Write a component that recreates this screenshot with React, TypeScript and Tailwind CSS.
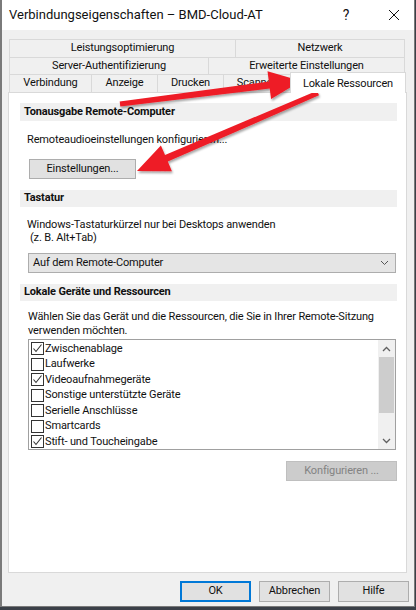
import React from 'react';

const row1 = [
  { label: 'Leistungsoptimierung', w: 'w-[226px]' },
  { label: 'Netzwerk', w: 'w-[170px]' },
];
const row2 = [
  { label: 'Server-Authentifizierung', w: 'w-[199px]' },
  { label: 'Erweiterte Einstellungen', w: 'w-[197px]' },
];
const row3 = [
  { label: 'Verbindung', w: 'w-[82px]' },
  { label: 'Anzeige', w: 'w-[66px]' },
  { label: 'Drucken', w: 'w-[66px]' },
  { label: 'Scannen', w: 'w-[68px]' },
];

const devices = [
  { label: 'Zwischenablage', checked: true },
  { label: 'Laufwerke', checked: false },
  { label: 'Videoaufnahmegeräte', checked: true },
  { label: 'Sonstige unterstützte Geräte', checked: false },
  { label: 'Serielle Anschlüsse', checked: false },
  { label: 'Smartcards', checked: false },
  { label: 'Stift- und Toucheingabe', checked: true },
];

const Tab = ({ label, w, last }: { label: string; w: string; last?: boolean }) => (
  <div
    className={`${w} h-full flex items-center justify-center border-t border-l border-[#d9d9d9] ${last ? 'border-r' : ''}`}
  >
    {label}
  </div>
);

const Section = ({ title, h }: { title: string; h: string }) => (
  <div className={`${h} bg-[#f0f0f0] pl-[4px] flex items-center font-bold text-[#111]`}>{title}</div>
);

const Checkbox = ({ checked }: { checked: boolean }) => (
  <div className="w-[13px] h-[13px] border border-[#333] bg-white shrink-0 flex items-center justify-center">
    {checked && (
      <svg width="11" height="11" viewBox="0 0 11 11">
        <path d="M1.5 5.5 L4 8.5 L9.5 1.5" fill="none" stroke="#333" strokeWidth="1.1" />
      </svg>
    )}
  </div>
);

const Chevron = ({ up }: { up?: boolean }) => (
  <svg width="9" height="6" viewBox="0 0 9 6">
    <path d={up ? 'M1 5 L4.5 1.5 L8 5' : 'M1 1 L4.5 4.5 L8 1'} fill="none" stroke="#606060" strokeWidth="1.3" />
  </svg>
);

const Arrows = () => (
  <svg className="absolute inset-0 pointer-events-none" width="416" height="610" viewBox="0 0 416 610">
    <defs>
      <filter id="sh" x="-10%" y="-10%" width="120%" height="130%">
        <feDropShadow dx="1" dy="2" stdDeviation="1.2" floodColor="#000" floodOpacity="0.35" />
      </filter>
    </defs>
    <g fill="#ee1c25" filter="url(#sh)">
      <polygon points="119.7,101.5 268.9,81.6 267.5,71.2 301,81 271.1,99 269.7,88.6 120.3,106.5" />
      <polygon points="317,90.7 165,155.1 160.9,145.4 137,171 171.9,171.2 167.8,161.5 319,95.3" />
    </g>
  </svg>
);

export default function App() {
  return (
    <div className="relative w-[416px] h-[610px] bg-[#3b4048] overflow-hidden font-['Segoe_UI',Roboto,'Liberation_Sans',sans-serif] text-[11px] tracking-[-0.15px] text-[#111]">
      <div className="w-[415px] h-[607px] bg-[#f0f0f0] border-l-2 border-r border-b border-[#7a7a7a] flex flex-col">
        {/* title bar */}
        <div className="h-[30px] bg-white flex items-center pl-[7px] shrink-0">
          <span className="text-[13px] tracking-normal text-[#111]">Verbindungseigenschaften – BMD-Cloud-AT</span>
          <span className="ml-auto text-[14px] w-[12px] text-center">?</span>
          <span className="ml-[36px] mr-[14px] w-[12px] flex justify-center">
            <svg width="12" height="12" viewBox="0 0 12 12">
              <path d="M1 1 L11 11 M11 1 L1 11" stroke="#111" strokeWidth="1" />
            </svg>
          </span>
        </div>

        <div className="pl-[6px] pt-[9px] flex flex-col">
          {/* tabs */}
          <div className="flex flex-col ml-[1px] text-[#111]">
            <div className="flex h-[18px]">
              {row1.map((t, i) => (
                <Tab key={t.label} {...t} last={i === row1.length - 1} />
              ))}
            </div>
            <div className="flex h-[17px]">
              {row2.map((t, i) => (
                <Tab key={t.label} {...t} last={i === row2.length - 1} />
              ))}
            </div>
            <div className="flex h-[18px] items-end">
              {row3.map((t) => (
                <Tab key={t.label} {...t} />
              ))}
              <div className="relative z-10 w-[116px] h-[21px] -mb-[1px] -ml-[1px] bg-white border-t border-l border-r border-[#d9d9d9] flex items-start justify-center pt-[3px]">
                Lokale Ressourcen
              </div>
            </div>
          </div>

          {/* panel */}
          <div className="w-[399px] h-[481px] bg-white border border-[#d9d9d9] pt-[10px] pl-[11px] pr-[9px] flex flex-col">
            <Section title="Tonausgabe Remote-Computer" h="h-[18px]" />
            <div className="mt-[12px] pl-[7px] leading-[14px]">Remoteaudioeinstellungen konfigurieren...</div>
            <div className="mt-[12px] ml-[9px] w-[107px] h-[20px] bg-[#e1e1e1] border border-[#adadad] flex items-center justify-center">
              Einstellungen...
            </div>

            <div className="mt-[11px]">
              <Section title="Tastatur" h="h-[17px]" />
            </div>
            <div className="mt-[11px] pl-[7px] leading-[13px]">
              <div>Windows-Tastaturkürzel nur bei Desktops anwenden</div>
              <div className="pl-[3px]">(z. B. Alt+Tab)</div>
            </div>
            <div className="mt-[9px] ml-[8px] w-[368px] h-[20px] bg-[#e5e5e5] border border-[#adadad] flex items-center pl-[4px] pr-[6px]">
              <span>Auf dem Remote-Computer</span>
              <span className="ml-auto flex">
                <svg width="9" height="6" viewBox="0 0 9 6">
                  <path d="M1 1 L4.5 4.5 L8 1" fill="none" stroke="#555" strokeWidth="1" />
                </svg>
              </span>
            </div>

            <div className="mt-[11px]">
              <Section title="Lokale Geräte und Ressourcen" h="h-[17px]" />
            </div>
            <div className="mt-[9px] pl-[8px] leading-[14px]">
              <div>Wählen Sie das Gerät und die Ressourcen, die Sie in Ihrer Remote-Sitzung</div>
              <div>verwenden möchten.</div>
            </div>
            <div className="mt-[1px] ml-[8px] w-[368px] h-[111px] border border-[#a0a0a0] bg-white flex overflow-hidden">
              <div className="flex-1 flex flex-col pl-[2px] pt-[1px]">
                {devices.map((d) => (
                  <div key={d.label} className="h-[15.5px] flex items-center shrink-0">
                    <Checkbox checked={d.checked} />
                    <span className="pl-[1px] leading-[12px]">{d.label}</span>
                  </div>
                ))}
              </div>
              <div className="w-[17px] bg-[#f0f0f0] flex flex-col">
                <div className="h-[17px] flex items-center justify-center">
                  <Chevron up />
                </div>
                <div className="h-[56px] mx-[1px] bg-[#cdcdcd]" />
                <div className="flex-1" />
                <div className="h-[17px] flex items-center justify-center">
                  <Chevron />
                </div>
              </div>
            </div>
            <div className="mt-[11px] self-end w-[111px] h-[20px] bg-[#cccccc] border border-[#bfbfbf] text-[#838383] flex items-center justify-center">
              Konfigurieren ...
            </div>
          </div>
        </div>

        {/* dialog buttons */}
        <div className="mt-[8px] flex justify-end gap-[8px] pr-[5px]">
          <div className="w-[71px] h-[21px] bg-[#e1e1e1] border-2 border-[#0078d7] flex items-center justify-center">OK</div>
          <div className="w-[71px] h-[21px] bg-[#e1e1e1] border border-[#adadad] flex items-center justify-center">Abbrechen</div>
          <div className="w-[71px] h-[21px] bg-[#e1e1e1] border border-[#adadad] flex items-center justify-center">Hilfe</div>
        </div>
      </div>
      <Arrows />
    </div>
  );
}
